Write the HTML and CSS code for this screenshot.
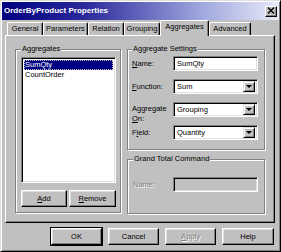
FILE: index.html
```html
<!DOCTYPE html>
<html>
<head>
<meta charset="utf-8">
<title>OrderByProduct Properties</title>
<link rel="stylesheet" href="styles.css">
</head>
<body>
<div class="window">
  <div class="titlebar">
    <span class="title">OrderByProduct Properties</span>
    <span class="close"><svg width="8" height="7" viewBox="0 0 8 7"><path d="M1 0.5 L7 6.5 M7 0.5 L1 6.5" stroke="#000" stroke-width="1.4" fill="none"/></svg></span>
  </div>
  <div class="tabs">
    <div class="tab t-general">General</div>
    <div class="tab t-params">Parameters</div>
    <div class="tab t-relation">Relation</div>
    <div class="tab t-grouping">Grouping</div>
    <div class="tab t-aggr active">Aggregates</div>
    <div class="tab t-adv">Advanced</div>
  </div>
  <div class="panel">
    <div class="group g-list">
      <span class="legend l-list">Aggregates</span>
      <div class="listbox">
        <div class="item selected"><span class="focus">SumQty</span></div>
        <div class="item">CountOrder</div>
      </div>
      <div class="btnrow">
        <div class="btn b-add"><u>A</u>dd</div>
        <div class="btn b-remove"><u>R</u>emove</div>
      </div>
    </div>
    <div class="rightcol">
      <div class="group g-settings">
        <span class="legend">Aggregate Settings</span>
        <div class="form">
          <label class="lbl"><u>N</u>ame:</label>
          <div class="field"><span class="val">SumQty</span></div>
          <label class="lbl"><u>F</u>unction:</label>
          <div class="field combo"><span class="val">Sum</span><span class="drop"><i class="arrow"></i></span></div>
          <label class="lbl two">Aggregate<br><u>O</u>n:</label>
          <div class="field combo"><span class="val">Grouping</span><span class="drop"><i class="arrow"></i></span></div>
          <label class="lbl">F<u>i</u>eld:</label>
          <div class="field combo"><span class="val">Quantity</span><span class="drop"><i class="arrow"></i></span></div>
        </div>
      </div>
      <div class="group g-grand">
        <span class="legend l-grand">Grand Total Command</span>
        <div class="form form-grand">
          <label class="lbl disabled">Name:</label>
          <div class="field field-disabled"></div>
        </div>
      </div>
    </div>
  </div>
  <div class="footer">
    <div class="btn fbtn default">OK</div>
    <div class="btn fbtn">Cancel</div>
    <div class="btn fbtn disabled"><u>A</u>pply</div>
    <div class="btn fbtn">Help</div>
  </div>
</div>
</body>
</html>
```
FILE: styles.css
```css
* { box-sizing: border-box; }
html, body { margin: 0; padding: 0; background: #c0c0c0; }
.window {
  width: 281px;
  height: 252px;
  background: #c0c0c0;
  border: 1px solid;
  border-color: #dfdfdf #000 #000 #dfdfdf;
  box-shadow: inset 1px 1px #fff, inset -1px -1px #808080;
  padding: 1px;
  display: flex;
  flex-direction: column;
  font-family: "Liberation Sans", Arial, sans-serif;
  font-size: 7.5px;
  color: #000;
}
u { text-decoration: underline; text-underline-offset: 1px; }

.titlebar {
  height: 18px;
  background: linear-gradient(90deg, #000080 0%, #2a2a9c 30%, #9aa2dc 70%, #e8eaf8 100%);
  display: flex;
  align-items: center;
  justify-content: space-between;
  padding: 0 2px 0 2px;
}
.title {
  color: #fff;
  font-weight: bold;
  font-size: 8px;
  line-height: 10px;
}
.close {
  width: 12px;
  height: 11px;
  background: #c0c0c0;
  border: 1px solid;
  border-color: #fff #000 #000 #fff;
  box-shadow: inset -1px -1px #808080;
  display: flex;
  align-items: center;
  justify-content: center;
  padding-bottom: 1px;
}

.tabs {
  height: 15px;
  display: flex;
  align-items: flex-end;
  padding-left: 5px;
  position: relative;
  z-index: 2;
}
.tab {
  height: 13px;
  border-top: 1px solid #fff;
  border-left: 1px solid #fff;
  border-right: 1px solid #000;
  border-radius: 2px 2px 0 0;
  box-shadow: inset -1px 0 #808080;
  text-align: center;
  line-height: 11px;
  white-space: nowrap;
}
.tab.active {
  height: 16px;
  margin-bottom: -1px;
  background: #c0c0c0;
  line-height: 12px;
}
.t-general { width: 36px; }
.t-params { width: 45px; }
.t-relation { width: 36px; }
.t-grouping { width: 36px; }
.t-aggr { width: 49px; }
.t-adv { width: 42px; }

.panel {
  margin-left: 3px;
  width: 270px;
  height: 188px;
  border-top: 1px solid #fff;
  border-left: 1px solid #fff;
  border-right: 1px solid #000;
  border-bottom: 1px solid #000;
  box-shadow: inset -1px -1px #808080;
  display: flex;
  align-items: flex-start;
  gap: 6px;
  padding: 13px 0 0 9px;
}

.group {
  position: relative;
  border: 1px solid #808080;
  box-shadow: inset 1px 1px #fff, 1px 1px #fff;
}
.legend {
  position: absolute;
  top: -6px;
  left: 4px;
  padding: 0 1px;
  background: #c0c0c0;
  line-height: 10px;
  white-space: nowrap;
}
.l-list { left: 5px; }
.l-grand { left: 5px; }

.g-list {
  width: 106px;
  height: 164px;
  padding: 7px 0 0 5px;
}
.listbox {
  width: 95px;
  height: 126px;
  background: #fff;
  border: 1px solid;
  border-color: #808080 #fff #fff #808080;
  box-shadow: inset 1px 1px #000, inset -1px -1px #dfdfdf;
  padding: 2px 2px;
}
.item {
  height: 10px;
  line-height: 10px;
  padding-left: 1px;
  white-space: nowrap;
}
.item.selected {
  background: #000080;
  color: #fff;
  outline: 1px dotted #c0c0c0;
  outline-offset: -1px;
}
.btnrow {
  display: flex;
  gap: 2px;
  margin-top: 7px;
}
.btn {
  height: 17px;
  background: #c0c0c0;
  border: 1px solid;
  border-color: #fff #000 #000 #fff;
  box-shadow: inset -1px -1px #808080, inset 1px 1px #dfdfdf;
  display: flex;
  align-items: center;
  justify-content: center;
  line-height: 10px;
  white-space: nowrap;
}
.b-add { width: 46px; }
.b-remove { width: 47px; }

.rightcol {
  width: 138px;
  display: flex;
  flex-direction: column;
  gap: 9px;
}
.g-settings { height: 101px; }
.g-grand { height: 55px; }

.form {
  display: grid;
  grid-template-columns: 45px 85px;
  grid-template-rows: repeat(4, 15px);
  row-gap: 8px;
  padding-top: 6px;
}
.form-grand {
  grid-template-rows: 15px;
  padding-top: 17px;
}
.lbl {
  padding-left: 4px;
  align-self: center;
  line-height: 10px;
  white-space: nowrap;
}
.lbl.two { align-self: start; padding-top: 2px; }
.lbl.disabled { padding-left: 5px; }
.disabled { color: #808080; text-shadow: 1px 1px #fff; }
.field {
  height: 15px;
  background: #fff;
  border: 1px solid;
  border-color: #808080 #fff #fff #808080;
  box-shadow: inset 1px 1px #000, inset -1px -1px #dfdfdf;
  display: flex;
  align-items: center;
  padding: 0 2px 0 3px;
  justify-content: space-between;
}
.val { line-height: 10px; white-space: nowrap; }
.field-disabled { background: #c0c0c0; }
.drop {
  width: 12px;
  height: 11px;
  background: #c0c0c0;
  border: 1px solid;
  border-color: #dfdfdf #000 #000 #dfdfdf;
  box-shadow: inset 1px 1px #fff, inset -1px -1px #808080;
  display: flex;
  align-items: center;
  justify-content: center;
}
.arrow {
  width: 0;
  height: 0;
  border-left: 3px solid transparent;
  border-right: 3px solid transparent;
  border-top: 3px solid #000;
}

.footer {
  display: flex;
  justify-content: flex-end;
  gap: 6px;
  padding: 5px 5px 0 0;
}
.fbtn { width: 51px; }
.fbtn:last-child { width: 52px; }
.btn.default {
  outline: 1px solid #000;
}
```
